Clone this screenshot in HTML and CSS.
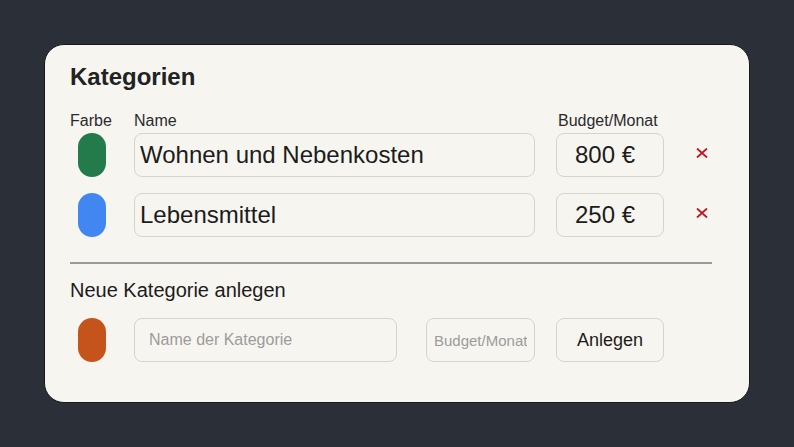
FILE: index.html
```html
<!DOCTYPE html>
<html lang="de">
<head>
  <meta charset="UTF-8">
  <meta name="viewport" content="width=device-width, initial-scale=1.0">
  <title>Kategorien</title>
  <link rel="stylesheet" href="styles.css">
</head>
<body>
  <div class="card">
    <h1>Kategorien</h1>

    <div class="grid head">
      <span>Farbe</span>
      <span>Name</span>
      <span class="budget-label">Budget/Monat</span>
    </div>

    <div class="grid row">
      <span class="swatch green"></span>
      <input type="text" class="name" value="Wohnen und Nebenkosten">
      <input type="text" class="budget" value="800 €">
      <button class="remove" title="Löschen">
        <svg width="12" height="10" viewBox="0 0 12 10"><path d="M1 0.5 L11 9.5 M11 0.5 L1 9.5" stroke="#c0161e" stroke-width="1.8" fill="none"/></svg>
      </button>
    </div>

    <div class="grid row">
      <span class="swatch blue"></span>
      <input type="text" class="name" value="Lebensmittel">
      <input type="text" class="budget" value="250 €">
      <button class="remove" title="Löschen">
        <svg width="12" height="10" viewBox="0 0 12 10"><path d="M1 0.5 L11 9.5 M11 0.5 L1 9.5" stroke="#c0161e" stroke-width="1.8" fill="none"/></svg>
      </button>
    </div>

    <hr class="divider">

    <h2>Neue Kategorie anlegen</h2>

    <div class="grid row">
      <span class="swatch orange"></span>
      <div class="new-fields">
        <input type="text" class="new-name" placeholder="Name der Kategorie">
        <input type="text" class="new-budget" placeholder="Budget/Monat">
      </div>
      <button class="add">Anlegen</button>
    </div>
  </div>
</body>
</html>
```

FILE: styles.css
```css
body {
  margin: 0;
  background: #2b3038;
  font-family: "Liberation Sans", Arial, sans-serif;
  color: #1c1c1c;
  height: 447px;
}
.card {
  box-sizing: border-box;
  margin: 44px 0 0 44px;
  width: 706px;
  height: 359px;
  background: #f7f5f0;
  border: 1px solid #15181c;
  border-radius: 20px;
  padding: 18px 37px 0 25px;
}
h1 {
  margin: 0;
  font-size: 24px;
  line-height: 28px;
  font-weight: bold;
  color: #222;
}
.grid {
  display: grid;
  grid-template-columns: 43px 401px 108px 1fr;
  column-gap: 21px;
  align-items: center;
}
.head {
  margin-top: 20px;
  font-size: 16px;
  line-height: 20px;
  color: #2b2b2b;
}
.budget-label {
  padding-left: 2px;
}
.row {
  margin-top: 16px;
}
.head + .row {
  margin-top: 2px;
}
.swatch {
  display: block;
  width: 28px;
  height: 44px;
  border-radius: 14px;
  margin-left: 8px;
}
.green { background: #237a4b; }
.blue { background: #4286f2; }
.orange { background: #c4531c; }

input, button {
  box-sizing: border-box;
  height: 44px;
  margin: 0;
  font-family: "Liberation Sans", Arial, sans-serif;
  color: #1c1c1c;
  background: #f7f5f0;
  border: 1px solid #d8d4cc;
  border-radius: 8px;
  outline: none;
}
.name {
  width: 401px;
  padding: 0 5px;
  font-size: 24px;
}
.budget {
  width: 108px;
  padding: 0 0 0 18px;
  font-size: 24px;
}
.remove {
  width: 12px;
  height: 10px;
  padding: 0;
  margin: 0 0 4px 11px;
  border: none;
  background: none;
  display: flex;
  cursor: pointer;
}
.divider {
  margin: 25px 0 0;
  border: none;
  height: 2px;
  background: #9a9a9a;
}
h2 {
  margin: 14px 0 0;
  font-size: 20px;
  line-height: 24px;
  font-weight: normal;
}
h2 + .row {
  margin-top: 16px;
}
.new-fields {
  display: flex;
  justify-content: space-between;
}
.new-name {
  width: 263px;
  padding: 0 14px;
  font-size: 16px;
}
.new-budget {
  width: 109px;
  padding: 0 7px;
  font-size: 15px;
}
input::placeholder {
  color: #9c9c9c;
}
.add {
  width: 108px;
  font-size: 18px;
  cursor: pointer;
}
```
